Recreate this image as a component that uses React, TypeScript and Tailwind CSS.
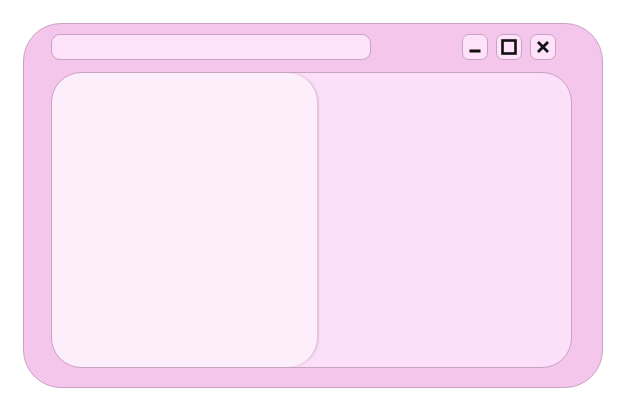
export default function App() {
  return (
    <div className="w-[626px] h-[411px] bg-white pt-[23px] pl-[23px]" style={{ fontFamily: '"Liberation Sans", sans-serif' }}>
      <div className="w-[580px] h-[365px] rounded-[38px] bg-[#f4c6ec] border border-[#c9a3c2] flex flex-col pl-[27px] pr-[30px] pt-[10px] pb-[19px]">
        <div className="flex items-center h-[26px] shrink-0">
          <div className="w-[320px] h-[26px] rounded-[9px] bg-[#fde2f9] border border-[#c9a3c2]" />
          <div className="flex-1" />
          <div className="flex gap-[8px] mr-[16px]">
            <button className="w-[26px] h-[26px] rounded-[7px] bg-[#fde2f9] border border-[#c9a3c2] flex items-center justify-center">
              <svg width="14" height="14" viewBox="0 0 14 14">
                <rect x="1.5" y="9.5" width="11" height="3" fill="#111" />
              </svg>
            </button>
            <button className="w-[26px] h-[26px] rounded-[7px] bg-[#fde2f9] border border-[#c9a3c2] flex items-center justify-center">
              <svg width="18" height="18" viewBox="0 0 18 18">
                <rect x="2.5" y="2.5" width="13" height="13" fill="none" stroke="#111" strokeWidth="2.6" />
              </svg>
            </button>
            <button className="w-[26px] h-[26px] rounded-[7px] bg-[#fde2f9] border border-[#c9a3c2] flex items-center justify-center">
              <svg width="16" height="16" viewBox="0 0 16 16">
                <path d="M3 3L13 13M13 3L3 13" stroke="#111" strokeWidth="2.8" />
              </svg>
            </button>
          </div>
        </div>
        <div className="mt-[12px] flex-1 rounded-[30px] bg-[#fcdff8] border border-[#c9a3c2] flex overflow-hidden">
          <div className="w-[266px] h-full rounded-[30px] bg-[#fdeefc] border-r border-[#e2c4dc] shadow-[1px_0_2px_rgba(180,140,170,0.35)]" />
        </div>
      </div>
    </div>
  );
}
